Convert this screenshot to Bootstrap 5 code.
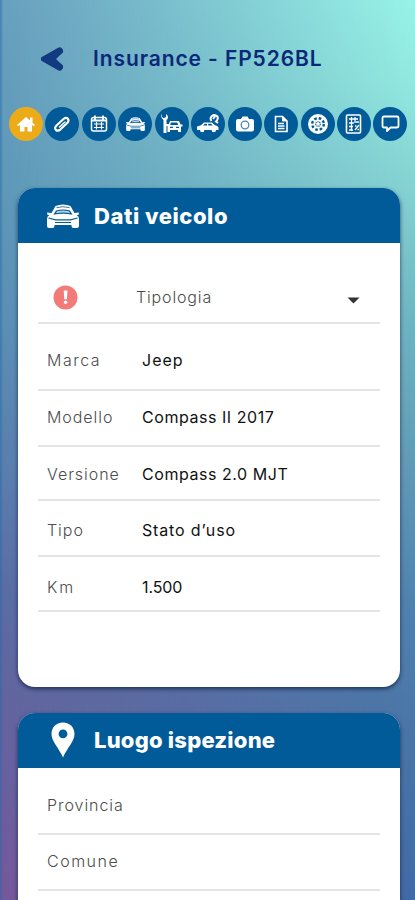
<!DOCTYPE html>
<html lang="it">
<head>
<meta charset="utf-8">
<meta name="viewport" content="width=device-width, initial-scale=1">
<title>Insurance - FP526BL</title>
<link href="https://cdn.jsdelivr.net/npm/bootstrap@5.3.0/dist/css/bootstrap.min.css" rel="stylesheet">
<style>
:root{--navy:#005b98}
body{font-family:Inter,"Open Sans",sans-serif;margin:0;background:#5b7aab}
.screen{height:900px;overflow:hidden;position:relative;isolation:isolate;
 background:linear-gradient(90deg,rgba(35,105,170,.45) 0 1px,transparent 3px),linear-gradient(#689fbe 0,#5f98b9 20%,#5b8fb4 36%,#5b7dad 53%,#5b6ca5 66%,#62659f 77%,#6b5f9f 88%,#77589a 100%)}
.screen::before{content:"";position:absolute;inset:0;z-index:-1;
 background:linear-gradient(#98f3e7 0,#92e9df 9%,#86d4d3 20%,#70b6c2 35%,#6098b5 53%,#5082ae 67%,#4a76a7 80%,#406ba5 100%);
 -webkit-mask-image:linear-gradient(90deg,transparent,rgba(0,0,0,.48) 50%,#000);mask-image:linear-gradient(90deg,transparent,rgba(0,0,0,.48) 50%,#000)}
.topbar{height:106px;padding:11px 0 0 41px}
.topbar h1{font-size:21px;font-weight:600;color:#0c2878;margin:0 0 0 28px;letter-spacing:.9px;white-space:nowrap}
.tools{padding:.5px 7.500px 0 9px;height:82px}
.tool{width:34px;height:34px;background:var(--navy)}
.tool.current{background:#ecab18}
.panel{margin:0 15px 25.5px 18px;border:0;border-radius:17px;overflow:hidden;box-shadow:0 2px 4px rgba(10,30,65,.75)}
.panel-main{height:499px}
.panel-place{height:230px}
.panel-head{height:55px;background:var(--navy);padding-left:29px;flex:none}
.panel-head svg{width:32px;flex:none}
.panel-head h2{font-size:22px;font-weight:800;margin:1px 0 0 15px;letter-spacing:.55px}
.panel-place h2{letter-spacing:.22px}
.fields{padding:0 20px}
.field{border-bottom:2px solid #e4e4e4;height:56px;padding:14px 0 0 9px;font-size:16px;line-height:24px;color:#111;white-space:nowrap}
.field dt{width:95px;flex:none;font-weight:300;color:#4c4c4c;letter-spacing:.95px}
.field dd{margin:0;font-weight:400;letter-spacing:.55px}
.field.pick{height:80.5px;padding:42px 20px 0 15px}
.pick span{margin-left:58px;font-weight:300;color:#4c4c4c;letter-spacing:.85px}
.field.f-marca{height:67px;padding-top:24.5px}
.field.f-marca dt{letter-spacing:1.5px}
.field.f-marca dd{letter-spacing:1px}
.field.f-versione{height:54.5px;padding-top:15px}
.field.f-tipo{padding-top:17px}
.field.f-tipo dd{letter-spacing:.85px}
.field.f-km{height:55px;padding-top:18px}
.field.f-km dt{letter-spacing:2px}
.field.f-km dd{letter-spacing:-.1px}
.field.f-prov{height:67.5px;padding-top:25px}
.field.f-comune dt{letter-spacing:1.5px}
</style>
</head>
<body>
<svg class="d-none" xmlns="http://www.w3.org/2000/svg">
 <symbol id="car" viewBox="0 0 32 24">
  <path fill="#fff" d="M8.500 2Q16-1 23.500 2l4 7 4.500-.5-.5 2.500-2 .3Q32 12 32 15v7q0 2-2 2h-3.500q-2 0-2-2v-1H7.500v1q0 2-2 2H2q-2 0-2-2v-7q0-3 2.500-3.700l-2-.3L0 8.500l4.500.5z"/>
  <path fill="#005b98" d="M9 6.500Q16 4.500 23 6.500l2.500 4.300Q16 8.500 6.500 10.800z"/>
  <path fill="#fff" opacity=".7" d="M10 7.200q6-1.500 12 0l1 2q-7-1.300-14 0z"/>
  <path fill="none" stroke="#005b98" stroke-width="1.200" d="M1.500 14l7 1.800h15l7-1.800M8 18.500h16"/>
  <path fill="none" stroke="#005b98" stroke-width=".8" d="M9.500 3.700q6.500-2 13 0"/>
 </symbol>
</svg>
<main class="screen">
 <header class="topbar d-flex align-items-center">
  <svg width="24" height="26" viewBox="0 0 24 26"><path d="M18.500 5L4.500 13l14 8-8-8z" fill="#123a80" stroke="#123a80" stroke-width="6.500" stroke-linejoin="round"/><path d="M18.500 5L4.500 13l14 8" fill="none" stroke="#123a80" stroke-width="7" stroke-linecap="round"/></svg>
  <h1>Insurance - FP526BL</h1>
 </header>
 <nav class="tools d-flex justify-content-between align-items-start">
  <a class="tool current rounded-circle d-flex align-items-center justify-content-center"><svg width="18" height="16" viewBox="0 0 18 16" fill="#fff"><path d="M9 1L0 9l1.200 1.300L3 9v6.500h4.500V11h3v4.500H15V9l1.800 1.300L18 9l-2.500-2.300V1.500H13v3z"/></svg></a>
  <a class="tool rounded-circle d-flex align-items-center justify-content-center"><svg width="18" height="18" viewBox="0 0 18 18" fill="none" stroke="#fff" stroke-linejoin="round"><path stroke-width="2.200" d="M3 15q-2-2 .5-4.500l7-6.500q2.500-2 4.200-.4t-.2 4.200l-7 6.500Q5 16.500 3 15z"/><path stroke-width="1.500" stroke-linecap="round" d="M6.500 12L12 7"/></svg></a>
  <a class="tool rounded-circle d-flex align-items-center justify-content-center"><svg width="18" height="17" viewBox="0 0 18 17" fill="none" stroke="#fff"><rect x="1.500" y="2.500" width="15" height="13.500" rx="2" stroke-width="1.500"/><path stroke-width="1.800" d="M2 5.500h14M5 .5v4M13 .5v4"/><path stroke-width="1.200" d="M4 9h10M4 12.500h10M6.500 7v7.500M11.500 7v7.500"/></svg></a>
  <a class="tool rounded-circle d-flex align-items-center justify-content-center"><svg width="19" height="14"><use href="#car"/></svg></a>
  <a class="tool rounded-circle d-flex align-items-center justify-content-center"><svg width="22" height="20" viewBox="0 0 22 20" fill="#fff"><path d="M1 0v3l1.800 1.200L5 3V0q3 2 1.500 5L5.500 6v13h-3V6Q-1 3 1 0z"/><path fill-rule="evenodd" d="M9 7h9l1.500 3.500h2v2H20V18h-3v-2H9v2H6.500v-6h-2v-2h3.500zM10 8.500l-.8 2.500h8l-1-2.500zM9 12.800v1.200h3v-1.200zM15 12.800v1.200h3v-1.200z"/></svg></a>
  <a class="tool rounded-circle d-flex align-items-center justify-content-center"><svg width="24" height="20" viewBox="0 0 24 20"><path fill="#fff" fill-rule="evenodd" d="M1 12.500l4-1.200L8 8.500h8l3 2.800q3 .2 3.500 2.200v2.500H20a2.200 2.200 0 0 1-4.400 0H8.400a2.200 2.200 0 0 1-4.400 0H1zM8.800 9.700L7 11.500h4V9.700zm3.400 0v1.800h4.500l-1.500-1.800z"/><path fill="none" stroke="#fff" stroke-width="2" d="M15.500 7q-2-3 .5-5t5.500.5q1 3-1.500 5l2 1.500M17 5l2-2.500"/></svg></a>
  <a class="tool rounded-circle d-flex align-items-center justify-content-center"><svg width="18" height="16" viewBox="0 0 18 16"><path fill="#fff" d="M2 3h3l1.500-2.500h5L13 3h3q2 0 2 2v8.500q0 2-2 2H2q-2 0-2-2V5q0-2 2-2z"/><circle cx="9" cy="9" r="3.800" fill="#fff" stroke="#4d87b5" stroke-width="1.300"/></svg></a>
  <a class="tool rounded-circle d-flex align-items-center justify-content-center"><svg width="15" height="18" viewBox="0 0 15 18" fill="none" stroke="#fff"><path stroke-width="1.600" d="M1.500 1.500h7l4.500 4.500v10.500H1.500z"/><path fill="#fff" d="M8.500 1.500V6H13z"/><path stroke-width="1.500" d="M4 8.500h6M4 11h6.500M4 13.500h6.500"/></svg></a>
  <a class="tool rounded-circle d-flex align-items-center justify-content-center"><svg width="20" height="20" viewBox="0 0 20 20"><circle cx="10" cy="10" r="10" fill="#fff"/><circle cx="10" cy="10" r="5.800" fill="none" stroke="#005b98" stroke-width="2.400" stroke-dasharray="2.600 1.955"/><circle cx="10" cy="10" r="2.300" fill="none" stroke="#005b98" stroke-width="1.100" stroke-dasharray="1.200 .606"/></svg></a>
  <a class="tool rounded-circle d-flex align-items-center justify-content-center"><svg width="17" height="20" viewBox="0 0 17 20" fill="none" stroke="#fff"><rect x="1.500" y="1" width="14" height="18" rx="1" stroke-width="1.600"/><path stroke-width="1.300" d="M4 5h9M4 9h5M4 12.500h4M4 16h4M6.500 3v14M10 3v6M10 16l4-5M11 8h3M10 12h1.500M12.500 15.500H14"/></svg></a>
  <a class="tool rounded-circle d-flex align-items-center justify-content-center"><svg width="19" height="18" viewBox="0 0 19 18" fill="none" stroke="#fff" stroke-width="1.800" stroke-linejoin="round"><path d="M3 1.500h13q1.500 0 1.500 1.500v8q0 1.500-1.500 1.500H9.500L6 16v-3.500H3Q1.500 12.500 1.500 11V3Q1.500 1.500 3 1.500z"/></svg></a>
 </nav>
 <section class="card panel panel-main">
  <div class="panel-head d-flex align-items-center text-white">
   <svg height="24"><use href="#car"/></svg>
   <h2>Dati veicolo</h2>
  </div>
  <dl class="fields mb-0">
   <div class="field pick d-flex align-items-start">
    <svg width="25" height="25" viewBox="0 0 25 25"><circle cx="12.500" cy="12.500" r="12" fill="#f27a78"/><path fill="#fff" d="M10.700 5.500h3.800l-.6 8.700h-2.600z"/><circle cx="12.600" cy="17.300" r="1.700" fill="#fff"/></svg>
    <span>Tipologia</span>
    <svg class="ms-auto mt-2" width="13" height="13" viewBox="0 0 13 13"><path fill="#333" d="M.5 4.500h12l-6 6z"/></svg>
   </div>
   <div class="field f-marca d-flex"><dt>Marca</dt><dd>Jeep</dd></div>
   <div class="field d-flex"><dt>Modello</dt><dd>Compass II 2017</dd></div>
   <div class="field f-versione d-flex"><dt>Versione</dt><dd>Compass 2.0 MJT</dd></div>
   <div class="field f-tipo d-flex"><dt>Tipo</dt><dd>Stato d’uso</dd></div>
   <div class="field f-km d-flex"><dt>Km</dt><dd>1.500</dd></div>
  </dl>
 </section>
 <section class="card panel panel-place">
  <div class="panel-head d-flex align-items-center text-white">
   <svg height="36" viewBox="0 0 32 36"><path fill="#fff" fill-rule="evenodd" d="M16 .5C9 .5 4.500 5.500 4.500 12c0 7.500 7.500 14 11.500 23.500C20 26 27.500 19.500 27.500 12 27.500 5.500 23 .5 16 .5zM16 7.500a4.400 4.400 0 1 1 0 8.800 4.400 4.400 0 0 1 0-8.800z"/></svg>
   <h2>Luogo ispezione</h2>
  </div>
  <dl class="fields mb-0">
   <div class="field f-prov d-flex"><dt>Provincia</dt></div>
   <div class="field f-comune d-flex"><dt>Comune</dt></div>
  </dl>
 </section>
</main>
<script src="https://cdn.jsdelivr.net/npm/bootstrap@5.3.0/dist/js/bootstrap.bundle.min.js"></script>
</body>
</html>
